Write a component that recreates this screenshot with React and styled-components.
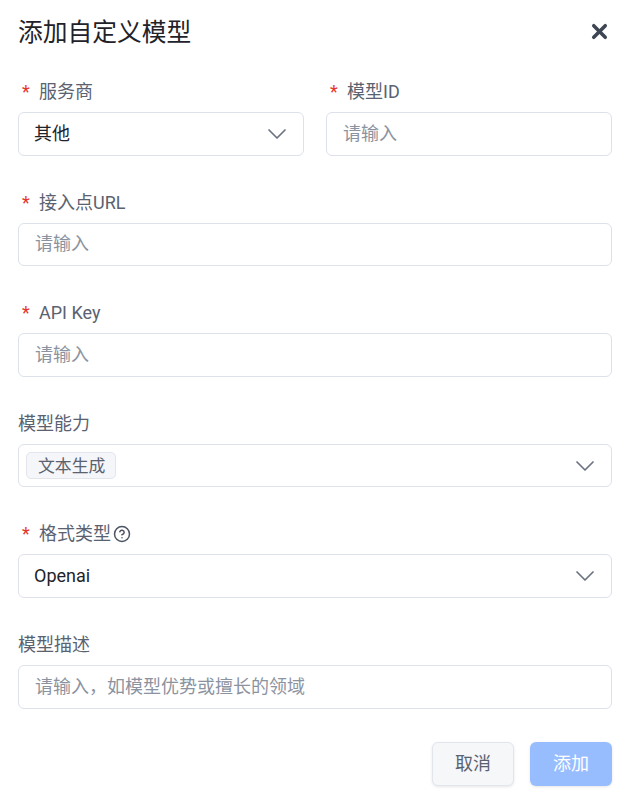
import React from "react";
import styled, { createGlobalStyle } from "styled-components";
import { ChevronDown, X, CircleHelp } from "lucide-react";

const GlobalStyle = createGlobalStyle`
  html, body {
    margin: 0;
    padding: 0;
    background: #ffffff;
    font-family: Roboto, "Noto Sans CJK SC", sans-serif;
  }
`;

function Label({ required, help, children }) {
  return (
    <FieldLabel>
      {required && <Star>*</Star>}
      {children}
      {help && (
        <HelpIcon>
          <CircleHelp size={18} strokeWidth={2} />
        </HelpIcon>
      )}
    </FieldLabel>
  );
}

function TextField({ label, required, placeholder }) {
  return (
    <Field>
      <Label required={required}>{label}</Label>
      <Control>
        <Placeholder>{placeholder}</Placeholder>
      </Control>
    </Field>
  );
}

function SelectField({ label, required, help, value }) {
  return (
    <Field>
      <Label required={required} help={help}>
        {label}
      </Label>
      <SelectControl>
        <Value>{value}</Value>
        <Chevron size={32} strokeWidth={1.3} />
      </SelectControl>
    </Field>
  );
}

export default function App() {
  return (
    <Page>
      <GlobalStyle />
      <Dialog>
        <Header>
          <Title>添加自定义模型</Title>
          <CloseButton>
            <X size={23} strokeWidth={3.7} />
          </CloseButton>
        </Header>
        <Row>
          <SelectField label="服务商" required value="其他" />
          <TextField label="模型ID" required placeholder="请输入" />
        </Row>
        <TextField label="接入点URL" required placeholder="请输入" />
        <TextField label="API Key" required placeholder="请输入" />
        <Field>
          <Label>模型能力</Label>
          <TagControl>
            <Tag>文本生成</Tag>
            <Chevron size={32} strokeWidth={1.3} />
          </TagControl>
        </Field>
        <SelectField label="格式类型" required help value="Openai" />
        <TextField label="模型描述" placeholder="请输入，如模型优势或擅长的领域" />
        <Footer>
          <CancelButton>取消</CancelButton>
          <SubmitButton>添加</SubmitButton>
        </Footer>
      </Dialog>
    </Page>
  );
}

const Page = styled.div`
  width: 630px;
  height: 796px;
  overflow: hidden;
`;

const Dialog = styled.div`
  box-sizing: border-box;
  width: 630px;
  padding: 19px 18px 0;
  display: flex;
  flex-direction: column;
  gap: 37.025px;
`;

const Header = styled.div`
  display: flex;
  align-items: center;
  justify-content: space-between;
  height: 25.925px;
`;

const Title = styled.div`
  padding-top: 2px;
  font-size: 24.75px;
  line-height: 27px;
  color: #1f2329;
`;

const CloseButton = styled.div`
  display: flex;
  color: #3d4652;
  margin-right: 1.5px;
`;

const Row = styled.div`
  display: grid;
  grid-template-columns: 1fr 1fr;
  gap: 22px;
`;

const Field = styled.div`
  display: flex;
  flex-direction: column;
`;

const FieldLabel = styled.div`
  display: flex;
  align-items: center;
  height: 20px;
  margin-bottom: 10px;
  font-size: 18px;
  line-height: 18px;
  color: #5a6270;
`;

const Star = styled.span`
  width: 21px;
  padding-left: 4px;
  box-sizing: border-box;
  font-size: 18px;
  color: #e5342e;
`;

const HelpIcon = styled.span`
  display: flex;
  margin-left: 2px;
  color: #4b5563;
`;

const Control = styled.div`
  box-sizing: border-box;
  height: 43.6px;
  padding: 0 10px 0 16px;
  display: flex;
  align-items: center;
  justify-content: space-between;
  background: #ffffff;
  border: 1px solid #dde1ea;
  border-radius: 6px;
  font-size: 18px;
  line-height: 18px;
`;

const SelectControl = styled(Control)`
  padding-left: 15px;
`;

const TagControl = styled(Control)`
  padding-left: 7px;
`;

const Placeholder = styled.span`
  color: #8c93a0;
`;

const Value = styled.span`
  color: #1f2329;
`;

const Chevron = styled(ChevronDown)`
  color: #6b7280;
  flex-shrink: 0;
`;

const Tag = styled.span`
  box-sizing: border-box;
  height: 27px;
  padding: 0 10px 0 11px;
  display: flex;
  align-items: center;
  background: #f5f6f9;
  border: 1px solid #e2e5ec;
  border-radius: 5px;
  font-size: 16.875px;
  line-height: 18px;
  color: #5a6270;
`;

const Footer = styled.div`
  display: flex;
  justify-content: flex-end;
  gap: 16px;
  margin-top: -3.5px;
`;

const Button = styled.div`
  box-sizing: border-box;
  width: 82px;
  height: 44px;
  display: flex;
  align-items: center;
  justify-content: center;
  border-radius: 6px;
  font-size: 18px;
  line-height: 18px;
  box-shadow: 0 1px 3px rgba(0, 0, 0, 0.1);
`;

const CancelButton = styled(Button)`
  background: #f6f7f9;
  border: 1px solid #e2e5ec;
  color: #5a6270;
`;

const SubmitButton = styled(Button)`
  background: #98bdff;
  color: #ffffff;
`;
